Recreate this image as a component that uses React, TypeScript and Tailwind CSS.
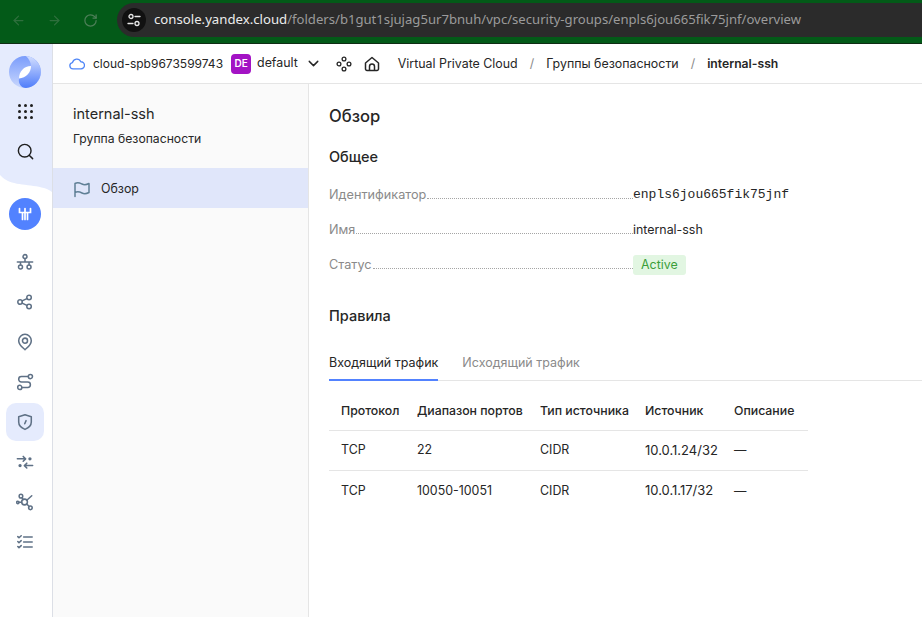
import React from "react";
import { ArrowLeft, ArrowRight, RotateCw, ChevronDown, Search } from "lucide-react";

const S = (p: { children: React.ReactNode }) => (
  <svg width={18} height={18} viewBox="0 0 20 20" fill="none" stroke="currentColor" strokeWidth={1.7} strokeLinecap="round" strokeLinejoin="round">
    {p.children}
  </svg>
);

const railIcons = [
  <S key="1"><circle cx="10" cy="4" r="2.2" /><circle cx="5" cy="15.5" r="2.2" /><circle cx="14.5" cy="15.5" r="2.2" /><path d="M10 6.2V10M1.500 10h17M5 10v3.300M14.500 10v3.300" /></S>,
  <S key="2"><circle cx="4.500" cy="10" r="2.500" /><circle cx="14.500" cy="5" r="2.500" /><circle cx="14.500" cy="15" r="2.500" /><path d="M6.800 8.800l5.300-2.600M6.800 11.200l5.300 2.600" /></S>,
  <S key="3"><path d="M10 18.500c-1-1-7-5-7-10a7 7 0 0 1 14 0c0 5-6 9-7 10z" /><circle cx="10" cy="8.500" r="2.800" /></S>,
  <S key="4"><circle cx="4.200" cy="16" r="2.300" /><circle cx="16" cy="4" r="2.300" /><path d="M6.500 16h6.500a3 3 0 0 0 0-6H6a3 3 0 0 1 0-6h7.500" /></S>,
  <S key="5"><path d="M10 2l7 2.200v5.800c0 4.200-3.800 6.900-7 8.200-3.200-1.300-7-4-7-8.200V4.200z" /><path d="M11.200 8.500l-1.500 3.500" /></S>,
  <S key="6"><path d="M1.500 6.500h9M8 3.800l2.700 2.700L8 9.200M18.500 14h-9M12 11.300L9.300 14l2.700 2.700" /><circle cx="15.500" cy="6.500" r="1" fill="currentColor" /><circle cx="4.500" cy="14" r="1" fill="currentColor" /></S>,
  <S key="7"><circle cx="9.500" cy="10" r="3.200" /><circle cx="5.500" cy="3.500" r="2" /><circle cx="16" cy="16.500" r="2" /><circle cx="2" cy="10.500" r="1.300" /><path d="M6.700 5.200L8 7.300M12 12.300l2.600 2.800M12 8l5.500-5M3.500 10.300h2.800" /></S>,
  <S key="8"><path d="M8.500 4.500H18M8.500 10H18M8.500 15.500H18M2 4l1.300 1.300L5.800 3M2 9.500l1.300 1.300L5.800 8.500M2 15l1.300 1.300L5.800 14" /></S>,
];

const rows = [
  ["TCP", "22", "CIDR", "10.0.1.24/32", "—"],
  ["TCP", "10050-10051", "CIDR", "10.0.1.17/32", "—"],
];

function Info({ label, children }: { label: string; children: React.ReactNode }) {
  return (
    <div className="flex h-5 items-center">
      <div className="flex w-[304px] items-baseline">
        <span className="text-[12.7px] leading-5 text-[#8a8a8a]">{label}</span>
        <span className="ml-px flex-1 border-b border-dotted border-[#a5a5a5]" />
      </div>
      {children}
    </div>
  );
}

export default function App() {
  return (
    <div className="flex h-[617px] w-[922px] flex-col overflow-hidden bg-white text-[12.4px] text-[#262626] [font-family:Inter,sans-serif]">
      {/* browser bar */}
      <div className="flex h-[44px] shrink-0 items-center border-b border-[#0f2d14] bg-[#035a18] pb-[3px]">
        <div className="flex w-[117px] items-center gap-[21px] pl-[11px] text-[#2f6f3d]">
          <ArrowLeft size={15} />
          <ArrowRight size={15} />
          <RotateCw size={15} className="text-[#4d7f58]" />
        </div>
        <div className="flex h-[34px] flex-1 items-center rounded-l-[17px] bg-[#2b2b2b] pl-[5px] text-[13.2px] [font-family:'Noto_Sans',sans-serif]">
          <div className="flex h-6 w-6 items-center justify-center rounded-full bg-[#111111]">
            <svg width="14" height="14" viewBox="0 0 14 14" fill="none" stroke="#e8e8e8" strokeWidth="1.300" strokeLinecap="round">
              <circle cx="4" cy="3.500" r="2" /><path d="M8 3.500h5M1 10.500h5" /><circle cx="10" cy="10.500" r="2" />
            </svg>
          </div>
          <span className="ml-[8px] whitespace-nowrap text-[#ececec]">console.yandex.cloud<span className="text-[13.12px] text-[#9b9b9b]">/folders/b1gut1sjujag5ur7bnuh/vpc/security-groups/enpls6jou665fik75jnf/overview</span></span>
        </div>
      </div>

      <div className="flex min-h-0 flex-1">
        {/* rail */}
        <div className="flex w-[53px] shrink-0 flex-col items-center border-r border-[#dcdfe6] bg-white">
          <div className="flex h-[131px] w-full flex-col items-center bg-[#e5ebfd] pr-[2px]">
            <svg width="32" height="32" viewBox="0 0 32 32" className="mt-[12px] shrink-0">
              <defs>
                <linearGradient id="lg" x1="0" y1="0" x2="0" y2="1">
                  <stop offset="0" stopColor="#7a9cfb" />
                  <stop offset="1" stopColor="#c9d7fd" />
                </linearGradient>
                <linearGradient id="lg2" x1="0" y1="0" x2="0" y2="1">
                  <stop offset="0" stopColor="#d3deff" />
                  <stop offset="1" stopColor="#4f7dfa" />
                </linearGradient>
              </defs>
              <circle cx="16" cy="16" r="16" fill="url(#lg)" />
              <path d="M17 .1A16 16 0 0 1 17 32C12 32 9 27 10 22.500L22 10C22 7 20 3 17 .1Z" fill="url(#lg2)" />
              <path d="M22 10C22 16.500 17 22 10 22.500C10 15.500 15 10 22 10Z" fill="#ffffff" />
            </svg>
            <div className="mt-[16px] grid grid-cols-3 gap-[3px]">
              {Array.from({ length: 9 }).map((_, i) => (
                <span key={i} className="h-[3px] w-[3px] rounded-full bg-[#1f1f1f]" />
              ))}
            </div>
            <Search size={19} className="mt-[23px] shrink-0 text-[#1f1f1f]" strokeWidth={1.8} />
          </div>
          <svg width="52" height="17" viewBox="0 0 52 17" className="block shrink-0">
            <path d="M0 0H52V17C44 10 24 11 12 7.500C6 5.500 3 3 0 0Z" fill="#e5ebfd" />
          </svg>
          <div className="mr-[2px] mt-[6px] flex h-8 w-8 shrink-0 items-center justify-center rounded-full bg-[#5282ff]">
            <svg width="14" height="14" viewBox="0 0 14 14" fill="none" stroke="#fff" strokeWidth="1.700" strokeLinecap="round">
              <path d="M1.500 1.500v4h11v-4M7 1.500v11M4.500 5.500v7M9.500 5.500v7" />
            </svg>
          </div>
          <div className="mr-[2px] mt-[12px] flex flex-col items-center text-[#5f7186]">
            {railIcons.map((ic, i) => (
              <div key={i} className={i === 4 ? "my-px flex h-[38px] w-[38px] items-center justify-center rounded-[10px] bg-[#e5ebfd]" : "flex h-[40px] w-[38px] items-center justify-center"}>
                {ic}
              </div>
            ))}
          </div>
        </div>

        <div className="flex min-w-0 flex-1 flex-col">
          {/* header */}
          <div className="flex h-[40px] shrink-0 items-center border-b border-[#e5e5e5] pl-[16px] text-[12.4px]">
            <svg width="16" height="13" viewBox="0 0 18 14" fill="none" stroke="#4f86f7" strokeWidth="1.500" strokeLinejoin="round"><path d="M4.500 13a3.500 3.500 0 0 1-.600-6.950A5 5 0 0 1 13.300 5a4 4 0 0 1 .200 8z" /></svg>
            <span className="ml-[8px] whitespace-nowrap text-[12px]">cloud-spb9673599743</span>
            <span className="ml-[8px] flex h-5 w-5 items-center justify-center rounded-[4px] bg-[#a313c4] text-[10px] font-semibold text-white">DE</span>
            <span className="ml-[6px]">default</span>
            <ChevronDown size={17} className="ml-[7px]" />
            <svg width="18" height="18" viewBox="0 0 18 18" fill="none" stroke="#262626" strokeWidth="1.300" className="ml-[13px]">
              <circle cx="9" cy="4" r="1.900" /><circle cx="9" cy="14" r="1.900" /><circle cx="4" cy="9" r="1.900" /><circle cx="14" cy="9" r="1.900" />
            </svg>
            <svg width="18" height="18" viewBox="0 0 18 18" fill="none" stroke="#262626" strokeWidth="1.500" strokeLinejoin="round" className="ml-[10px]">
              <path d="M2.500 8L9 2.500 15.500 8v6A1.500 1.500 0 0 1 14 15.500H4A1.500 1.500 0 0 1 2.500 14zM6.500 15.500V11.500a2.500 2.500 0 0 1 5 0v4" />
            </svg>
            <div className="ml-[17px] mt-[2px] flex items-center">
              <span className="whitespace-nowrap">Virtual Private Cloud</span>
              <span className="ml-[12px] text-[#8a8a8a]">/</span>
              <span className="ml-[12px] whitespace-nowrap">Группы безопасности</span>
              <span className="ml-[12px] text-[#8a8a8a]">/</span>
              <span className="ml-[12px] text-[12.2px] font-semibold">internal-ssh</span>
            </div>
          </div>

          <div className="flex min-h-0 flex-1">
            {/* side */}
            <div className="w-[256px] shrink-0 border-r border-[#e5e5e5] bg-[#fafafa]">
              <div className="pl-5 pt-[20px] text-[14.5px] leading-5">internal-ssh</div>
              <div className="pl-5 pt-[5px] text-[12.2px] leading-5">Группа безопасности</div>
              <div className="mt-[19px] flex h-10 items-center bg-[#e0e6fa] pl-5">
                <svg width="18" height="18" viewBox="0 0 18 18" fill="none" stroke="#5f7f95" strokeWidth="1.500" strokeLinecap="round" strokeLinejoin="round" className="mt-px">
                  <path d="M2 16.500V3.500C5 1.800 7 3 9 4s4 1 7-.500v9c-3 1.500-5 1.500-7 .500s-4-2-7-.500" />
                </svg>
                <span className="ml-[10px] mt-[2px]">Обзор</span>
              </div>
            </div>
            {/* main */}
            <div className="min-w-0 flex-1 pl-5 pt-[20px]">
              <div className="text-[16.6px] font-medium leading-6">Обзор</div>
              <div className="mt-[19px] text-[14.5px] font-medium leading-5">Общее</div>
              <div className="mt-[18px] flex flex-col gap-[15px]">
                <Info label="Идентификатор"><span className="text-[13px] [font-family:'Liberation_Mono',monospace]">enpls6jou665fik75jnf</span></Info>
                <Info label="Имя"><span>internal-ssh</span></Info>
                <Info label="Статус"><span className="rounded-[3px] bg-[#e2f6e2] px-2 text-[12.4px] leading-5 text-[#3a9e3a]">Active</span></Info>
              </div>
              <div className="mt-[31px] text-[14.5px] font-medium leading-5">Правила</div>
              <div className="mt-[14px] flex h-[41px] gap-6 border-b border-[#e5e5e5] text-[12.5px]">
                <div className="-mb-px h-[41px] border-b-2 border-[#5282ff] pt-[13px] leading-5">Входящий трафик</div>
                <div className="pt-[13px] leading-5 text-[#8a8a8a]">Исходящий трафик</div>
              </div>
              <div className="mt-[8px] w-[479px]">
                <div className="flex h-[42px] items-center border-b border-[#e5e5e5] pt-[4px] text-[12.3px] font-medium">
                  <span className="w-[88px] shrink-0 pl-3">Протокол</span>
                  <span className="w-[123px] shrink-0">Диапазон портов</span>
                  <span className="w-[105px] shrink-0">Тип источника</span>
                  <span className="w-[89px] shrink-0">Источник</span>
                  <span>Описание</span>
                </div>
                {rows.map((r, i) => (
                  <div key={i} className={i === 0 ? "flex h-10 items-center border-b border-[#e5e5e5]" : "flex h-10 items-center"}>
                    <span className="w-[88px] shrink-0 pl-3">{r[0]}</span>
                    <span className="w-[123px] shrink-0">{r[1]}</span>
                    <span className="w-[105px] shrink-0">{r[2]}</span>
                    <span className="w-[89px] shrink-0 text-[13px]">{r[3]}</span>
                    <span>{r[4]}</span>
                  </div>
                ))}
              </div>
            </div>
          </div>
        </div>
      </div>
    </div>
  );
}
